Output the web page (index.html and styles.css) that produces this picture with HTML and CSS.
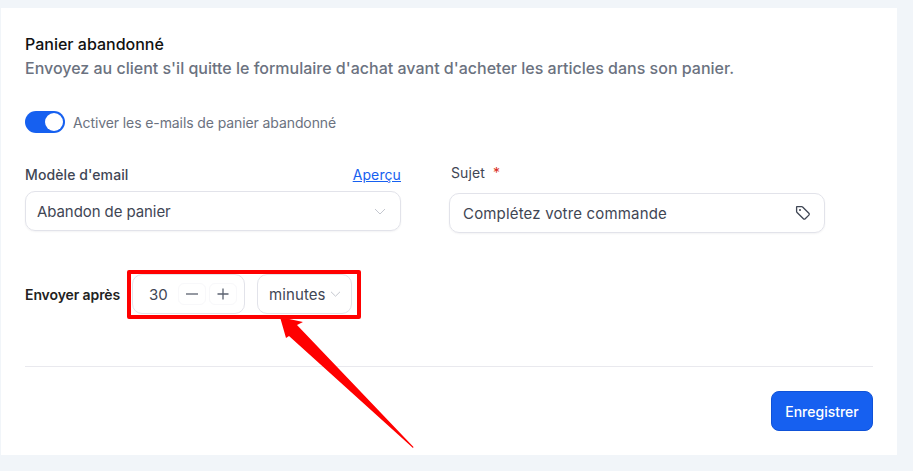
FILE: index.html
```html
<!DOCTYPE html>
<html lang="fr">
<head>
    <meta charset="UTF-8">
    <title>Panier abandonné</title>
    <link rel="stylesheet" href="styles.css">
</head>
<body>
    <div class="card">
        <h1 class="title">Panier abandonné</h1>
        <p class="desc">Envoyez au client s'il quitte le formulaire d'achat avant d'acheter les articles dans son panier.</p>

        <div class="toggle-row">
            <span class="toggle"><span class="knob"></span></span>
            <span class="toggle-label">Activer les e-mails de panier abandonné</span>
        </div>

        <div class="fields">
            <div class="field">
                <div class="field-head">
                    <span class="label">Modèle d'email</span>
                    <a class="link" href="#">Aperçu</a>
                </div>
                <div class="box">
                    <span>Abandon de panier</span>
                    <svg class="chev" width="12" height="7" viewBox="0 0 12 7"><path d="M1 1l5 5 5-5" fill="none" stroke="#c4c7cf" stroke-width="1"/></svg>
                </div>
            </div>
            <div class="field field-right">
                <div class="field-head">
                    <span class="label label-light">Sujet <span class="req">*</span></span>
                </div>
                <div class="box">
                    <span>Complétez votre commande</span>
                    <svg class="tag" width="16" height="16" viewBox="0 0 16 16"><path d="M2 1.600h4.600c.4 0 .7.1 1 .4l6.300 6.300c.5.5.5 1.300 0 1.800l-3.700 3.700c-.5.5-1.300.5-1.800 0L2.100 7.500c-.3-.3-.5-.6-.5-1V2c0-.2.2-.4.4-.4z" fill="none" stroke="#3f4654" stroke-width="1.300" stroke-linejoin="round"/><circle cx="5" cy="5" r="1" fill="#3f4654"/></svg>
                </div>
            </div>
        </div>

        <div class="delay-row">
            <span class="delay-label">Envoyer après</span>
            <div class="number-box">
                <span class="number">30</span>
                <span class="step">
                    <svg width="14" height="14" viewBox="0 0 14 14"><path d="M1 7h12" stroke="#5b6270" stroke-width="1.300"/></svg>
                </span>
                <span class="step">
                    <svg width="14" height="14" viewBox="0 0 14 14"><path d="M1.500 7h11M7 1.500v11" stroke="#5b6270" stroke-width="1.300"/></svg>
                </span>
            </div>
            <div class="unit-box">
                <span>minutes</span>
                <svg width="11" height="6" viewBox="0 0 11 6"><path d="M1 .8l4.500 4.400L10 .8" fill="none" stroke="#c4c7cf" stroke-width="1"/></svg>
            </div>
        </div>

        <div class="footer">
            <button class="save">Enregistrer</button>
        </div>
    </div>

    <!-- annotation over the screenshot -->
    <div class="mark"></div>
    <svg class="arrow" width="140" height="140" viewBox="0 0 140 140">
        <path d="M0 1L23 6 17 9 133.500 131 133 132 9 20 6 22z" fill="#ff0000"/>
    </svg>
</body>
</html>
```

FILE: styles.css
```css
html, body {
    height: 100%;
}
body {
    margin: 0;
    background-color: #f1f5f9;
    font-family: "Inter", "Liberation Sans", sans-serif;
    color: #3f4654;
    overflow: hidden;
}
.card {
    box-sizing: border-box;
    width: 896px;
    height: 447px;
    margin: 8px 0 0 1px;
    padding: 27px 24px 24px;
    background-color: #fff;
}
.title {
    margin: 0;
    font-size: 16px;
    line-height: 19px;
    font-weight: 500;
    color: #111;
}
.desc {
    margin: 5px 0 0;
    font-size: 16px;
    line-height: 19px;
    font-weight: 500;
    color: #6b7280;
}
.toggle-row {
    display: flex;
    align-items: center;
    gap: 8px;
    margin-top: 33px;
}
.toggle {
    display: block;
    box-sizing: border-box;
    width: 40px;
    height: 22px;
    padding: 2px 2px 2px 20px;
    border-radius: 11px;
    background-color: #1660f0;
}
.knob {
    display: block;
    width: 18px;
    height: 18px;
    border-radius: 50%;
    background-color: #fff;
}
.toggle-label {
    font-size: 14px;
    letter-spacing: -0.1px;
    color: #6b7280;
}
.fields {
    display: flex;
    gap: 48px;
    margin-top: 30px;
}
.field {
    width: 376px;
}
.field-head {
    display: flex;
    justify-content: space-between;
    align-items: center;
    height: 23px;
    margin-bottom: 5px;
}
.field-right .field-head {
    height: 19px;
    margin-bottom: 11px;
    padding-left: 2px;
}
.label {
    font-size: 14px;
    font-weight: 500;
    letter-spacing: 0.1px;
    color: #3f4654;
}
.label-light {
    font-weight: 400;
}
.req {
    margin-left: 4px;
    color: #d92d20;
}
.link {
    font-size: 14px;
    letter-spacing: 0.1px;
    color: #1660f0;
    text-decoration: underline;
}
.box {
    display: flex;
    justify-content: space-between;
    align-items: center;
    box-sizing: border-box;
    height: 40px;
    padding: 0 14px 0 11px;
    border: 1px solid #e2e3ea;
    border-radius: 10px;
    font-size: 15px;
    letter-spacing: -0.08px;
    box-shadow: 0 1px 2px rgba(16, 24, 40, 0.05);
}
.field-right .box {
    padding-left: 13px;
    padding-right: 13px;
    letter-spacing: 0.17px;
}
.delay-row {
    display: flex;
    align-items: center;
    margin-top: 41px;
}
.delay-label {
    width: 107px;
    font-size: 14px;
    font-weight: 600;
    letter-spacing: -0.1px;
    color: #222;
}
.number-box, .unit-box {
    display: flex;
    align-items: center;
    box-sizing: border-box;
    height: 40px;
    border: 1px solid #e2e3ea;
    border-radius: 10px;
    font-size: 15px;
}
.number-box {
    width: 113px;
    padding-left: 16px;
    gap: 3px;
}
.number {
    width: 26px;
}
.step {
    display: flex;
    align-items: center;
    justify-content: center;
    width: 28px;
    height: 22px;
    border: 1px solid #f8f8fa;
    border-radius: 6px;
    box-sizing: border-box;
}
.unit-box {
    width: 95px;
    margin-left: 12px;
    padding-left: 11px;
    gap: 4px;
    letter-spacing: 0.1px;
}
.footer {
    display: flex;
    justify-content: flex-end;
    margin-top: 52px;
    padding-top: 24px;
    border-top: 1px solid #e9e9ee;
}
.save {
    width: 102px;
    height: 40px;
    border: 1px solid #0f52d8;
    border-radius: 8px;
    background-color: #1660f0;
    color: #fff;
    font-family: inherit;
    font-size: 14px;
    font-weight: 500;
}
.mark {
    position: absolute;
    left: 127px;
    top: 270px;
    width: 234px;
    height: 49px;
    box-sizing: border-box;
    border: 4px solid #ff0000;
    border-radius: 2px;
}
.arrow {
    position: absolute;
    left: 280px;
    top: 316px;
}
```
